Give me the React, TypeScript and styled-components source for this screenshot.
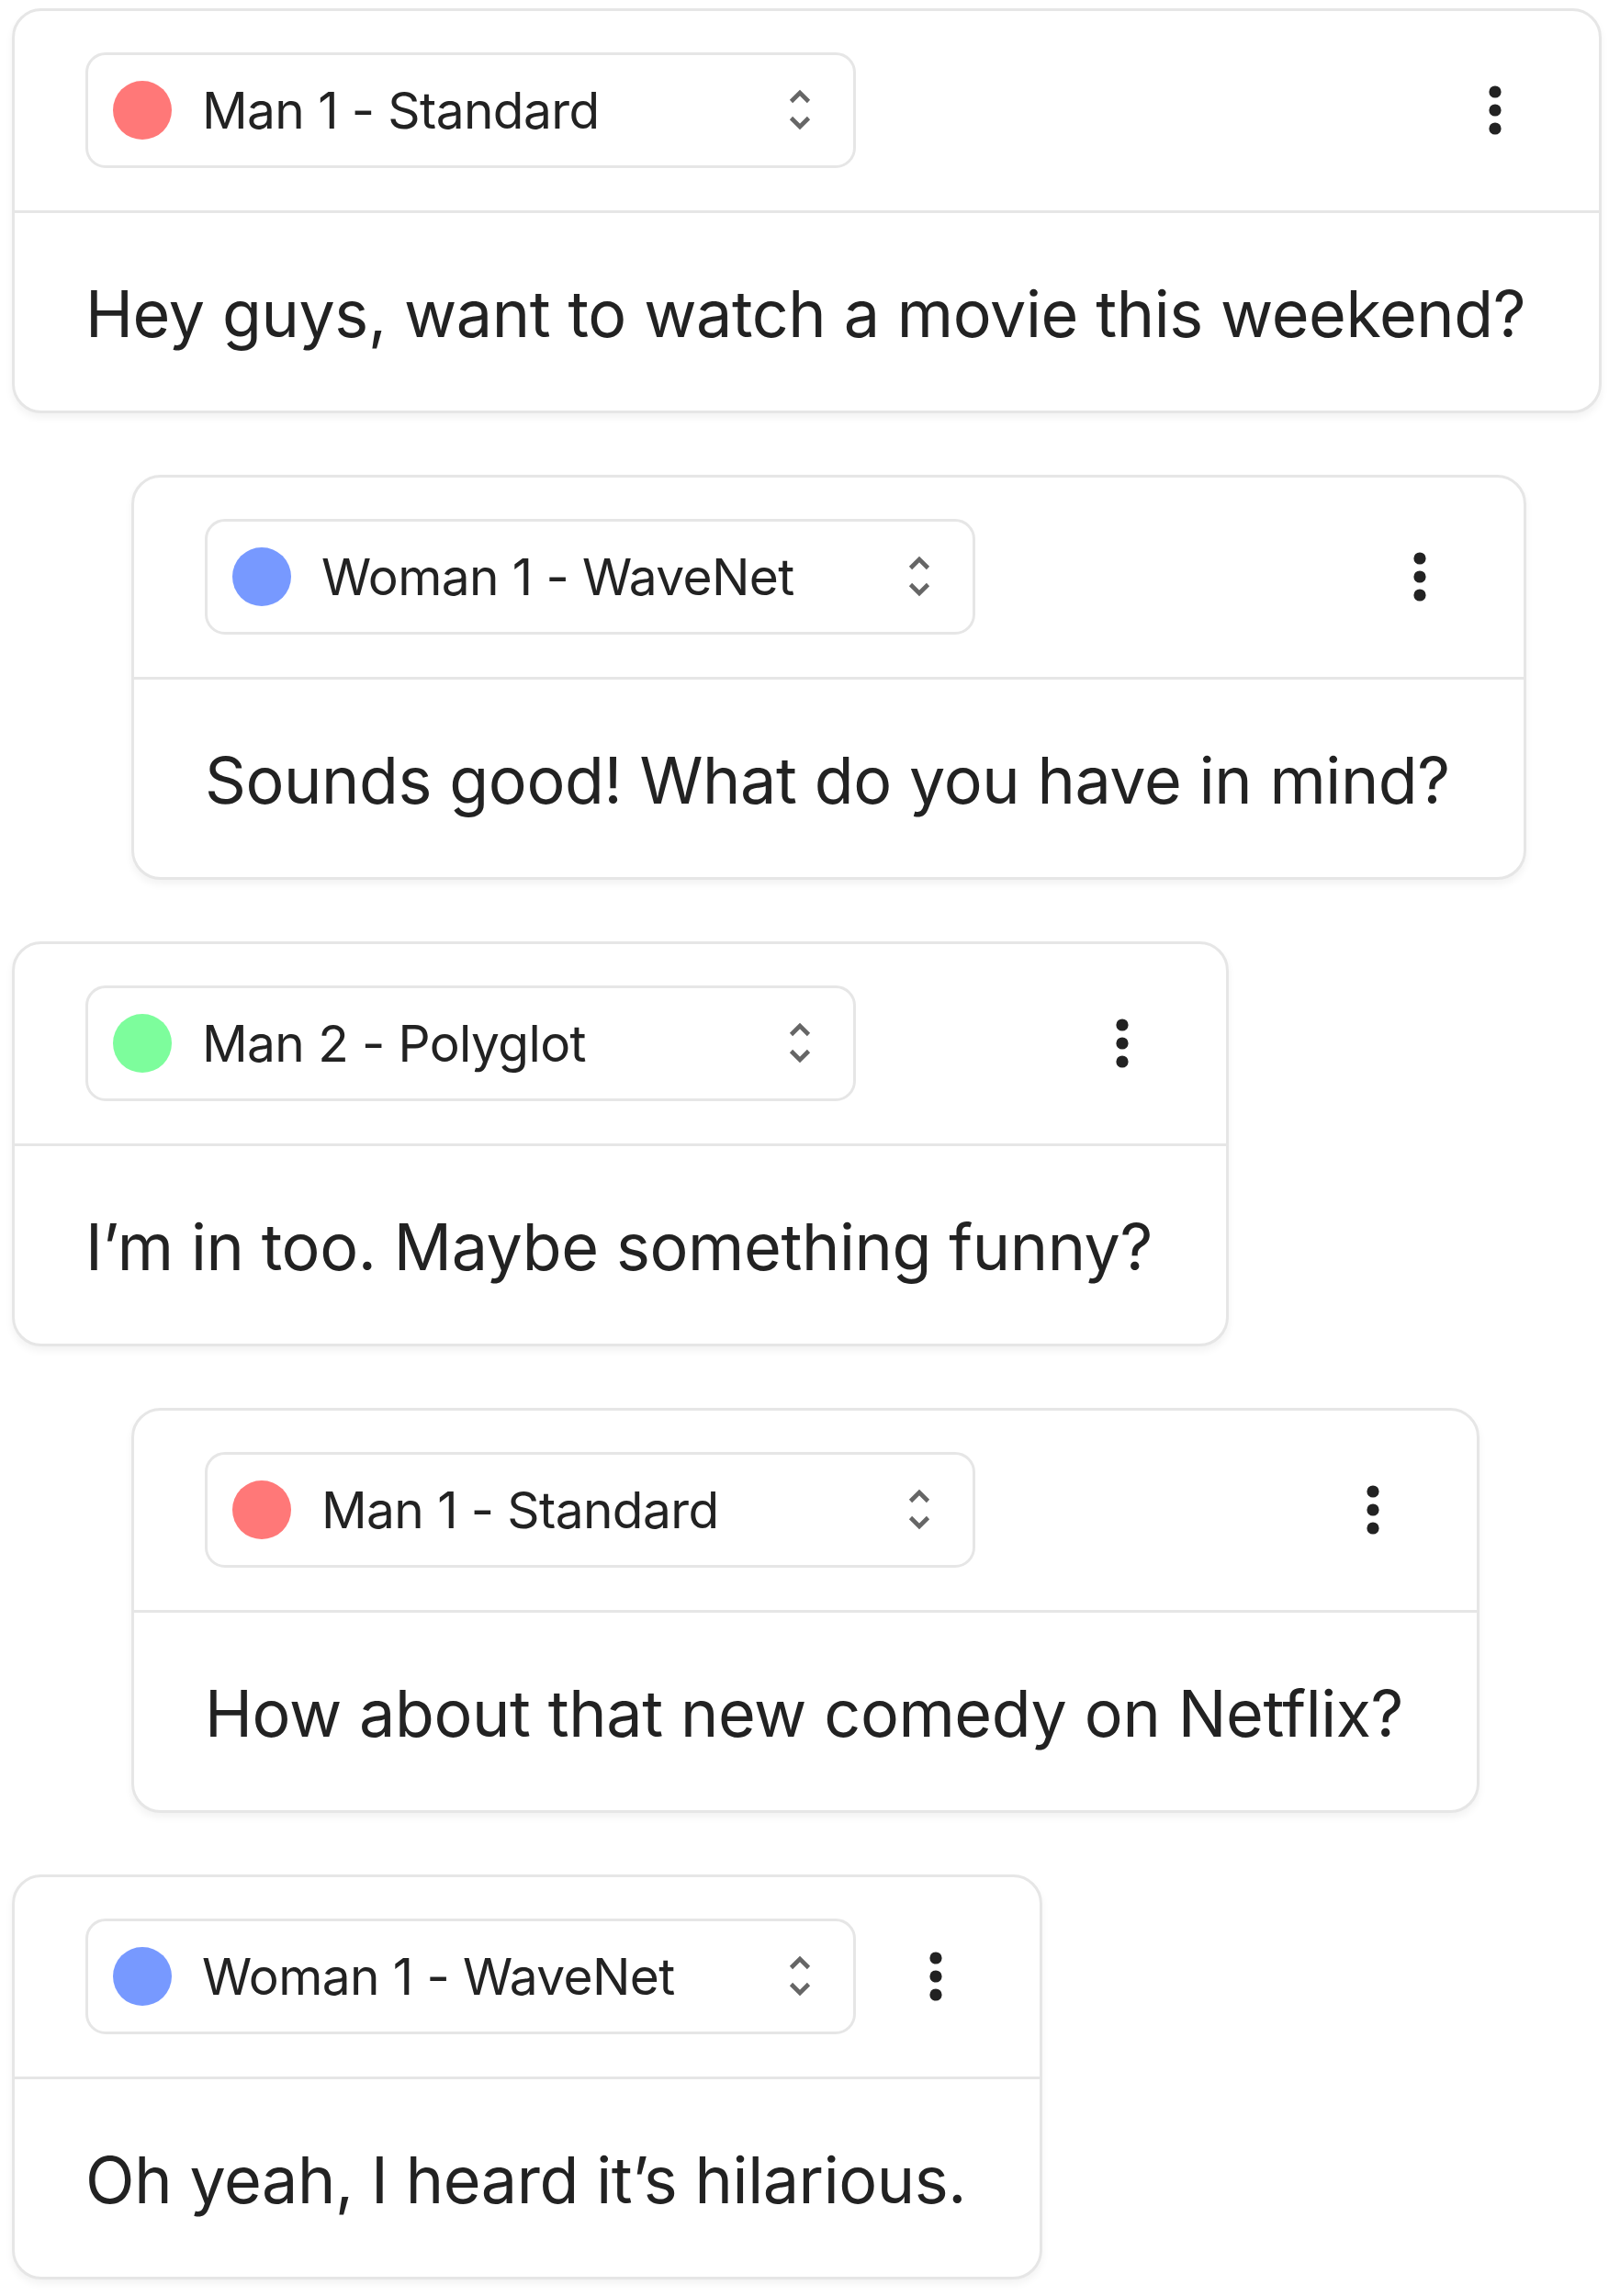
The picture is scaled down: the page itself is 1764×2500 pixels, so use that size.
import React from "react";
import styled, { createGlobalStyle } from "styled-components";

const GlobalStyle = createGlobalStyle`
  html, body {
    margin: 0;
    padding: 0;
    background: #ffffff;
  }
  body {
    font-family: Inter, "Noto Sans", "Liberation Sans", sans-serif;
    color: #222222;
  }
`;

const Page = styled.div`
  display: flex;
  flex-direction: column;
  align-items: flex-start;
  gap: 67px;
  padding: 9px 0 40px 13px;
`;

const Card = styled.div<{ $indent: boolean }>`
  display: flex;
  flex-direction: column;
  margin-left: ${(p) => (p.$indent ? "130px" : "0")};
  background: #ffffff;
  border: 3px solid #e6e6e6;
  border-radius: 32px;
  box-shadow: 0 5px 8px rgba(0, 0, 0, 0.05);
`;

const Header = styled.div`
  display: flex;
  align-items: center;
  justify-content: space-between;
  gap: 35px;
  padding: 45px 78px 46px 77px;
  border-bottom: 3px solid #e6e6e6;
`;

const Select = styled.div`
  display: flex;
  align-items: center;
  box-sizing: border-box;
  width: 839px;
  height: 126px;
  padding: 0 34px 0 27px;
  border: 3px solid #e6e6e6;
  border-radius: 22px;
  background: #ffffff;
`;

const Dot = styled.span<{ $color: string }>`
  flex: none;
  width: 64px;
  height: 64px;
  border-radius: 50%;
  background: ${(p) => p.$color};
`;

const VoiceName = styled.span`
  flex: 1;
  margin-left: 33px;
  font-size: 55px;
  line-height: 1;
  letter-spacing: -0.6px;
  color: #222222;
  white-space: nowrap;
`;

const ChevronBox = styled.span`
  display: flex;
  align-items: center;
  justify-content: center;
  width: 48px;
  height: 48px;
`;

const MenuButton = styled.span`
  display: flex;
  align-items: center;
  justify-content: center;
  flex: none;
  width: 70px;
  height: 70px;
`;

const Body = styled.div`
  padding: 68px 80px 63px 77px;
  font-size: 70px;
  line-height: 84px;
  letter-spacing: -0.4px;
  color: #222222;
  white-space: nowrap;
`;

const Chevrons = () => (
  <svg width="24" height="48" viewBox="0 0 24 48" fill="none">
    <path d="M2.5 14.5 L12 5 L21.5 14.5" stroke="#666666" strokeWidth="4.6" />
    <path d="M2.5 32.5 L12 42 L21.5 32.5" stroke="#666666" strokeWidth="4.6" />
  </svg>
);

const Kebab = () => (
  <svg width="14" height="54" viewBox="0 0 14 54">
    <circle cx="7" cy="7" r="6.6" fill="#222222" />
    <circle cx="7" cy="27" r="6.6" fill="#222222" />
    <circle cx="7" cy="47" r="6.6" fill="#222222" />
  </svg>
);

type Message = {
  voice: string;
  color: string;
  text: string;
  indent: boolean;
};

const RED = "#ff7878";
const BLUE = "#7799ff";
const GREEN = "#7dfd9c";

const messages: Message[] = [
  { voice: "Man 1 - Standard", color: RED, text: "Hey guys, want to watch a movie this weekend?", indent: false },
  { voice: "Woman 1 - WaveNet", color: BLUE, text: "Sounds good! What do you have in mind?", indent: true },
  { voice: "Man 2 - Polyglot", color: GREEN, text: "I\u2019m in too. Maybe something funny?", indent: false },
  { voice: "Man 1 - Standard", color: RED, text: "How about that new comedy on Netflix?", indent: true },
  { voice: "Woman 1 - WaveNet", color: BLUE, text: "Oh yeah, I heard it\u2019s hilarious.", indent: false },
];

export default function App() {
  return (
    <>
      <GlobalStyle />
      <Page>
        {messages.map((m, i) => (
          <Card key={i} $indent={m.indent}>
            <Header>
              <Select>
                <Dot $color={m.color} />
                <VoiceName>{m.voice}</VoiceName>
                <ChevronBox>
                  <Chevrons />
                </ChevronBox>
              </Select>
              <MenuButton>
                <Kebab />
              </MenuButton>
            </Header>
            <Body>{m.text}</Body>
          </Card>
        ))}
      </Page>
    </>
  );
}
